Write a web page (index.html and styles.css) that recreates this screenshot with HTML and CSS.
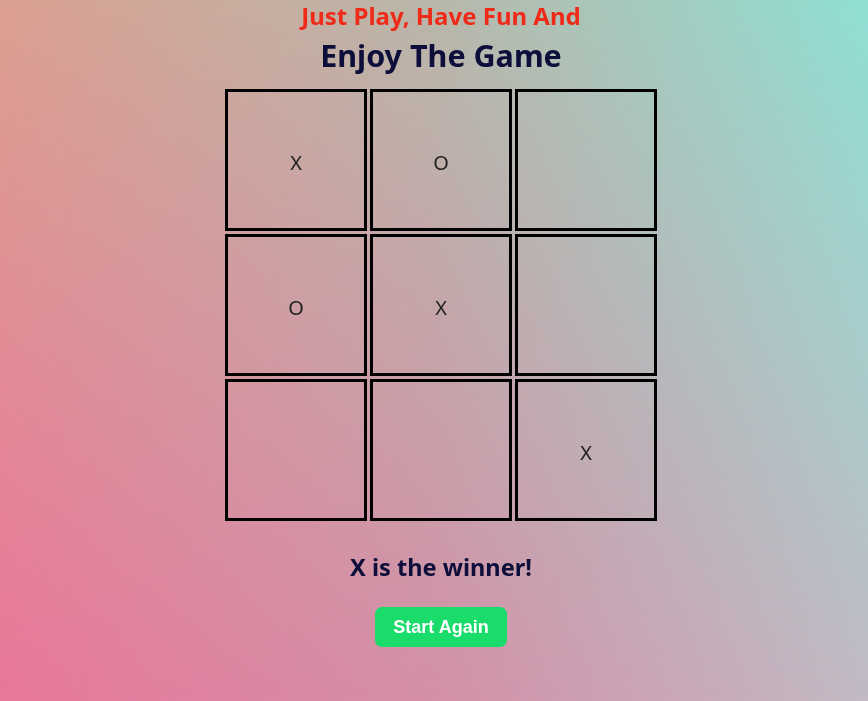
FILE: index.html
```html
<!DOCTYPE html>
<html lang="en">
<head>
<meta charset="utf-8">
<title>Tic Tac Toe</title>
<link rel="stylesheet" href="styles.css">
</head>
<body>
<main class="page">
  <h2 class="tagline">Just Play, Have Fun And</h2>
  <h1 class="title">Enjoy The Game</h1>
  <div class="board">
    <div class="cell">X</div>
    <div class="cell">O</div>
    <div class="cell"></div>
    <div class="cell">O</div>
    <div class="cell">X</div>
    <div class="cell"></div>
    <div class="cell"></div>
    <div class="cell"></div>
    <div class="cell">X</div>
  </div>
  <p class="status">X is the winner!</p>
  <button class="restart">Start Again</button>
</main>
</body>
</html>
```
FILE: styles.css
```css
html {
  min-height: 100%;
  background: linear-gradient(to right, #e9779a 0%, #d490a8 50%, #c2bac4 100%);
}

body {
  margin: 0;
  min-height: 100vh;
  font-family: "Noto Sans", "Open Sans", sans-serif;
}

body::before {
  content: "";
  position: fixed;
  inset: 0;
  z-index: -1;
  background: linear-gradient(to right, #dba091 0%, #b8b7aa 50%, #8fdfd3 100%);
  -webkit-mask-image: linear-gradient(to bottom, #000 0%, transparent 100%);
  mask-image: linear-gradient(to bottom, #000 0%, transparent 100%);
}

.page {
  display: flex;
  flex-direction: column;
  align-items: center;
  padding-left: 14px;
}

.tagline {
  margin: 0;
  font-size: 24px;
  line-height: 32px;
  font-weight: 700;
  color: #f02a18;
}

.title {
  margin: 3px 0 0;
  font-size: 30.5px;
  line-height: 40px;
  font-weight: 700;
  color: #0e0e3a;
}

.board {
  margin-top: 14px;
  display: grid;
  grid-template-columns: repeat(3, 142px);
  grid-auto-rows: 142px;
  gap: 3px;
}

.cell {
  box-sizing: border-box;
  border: 3px solid #000;
  padding-top: 4px;
  display: flex;
  align-items: center;
  justify-content: center;
  font-size: 20px;
  color: #222;
}

.status {
  margin: 30px 0 0;
  font-size: 23.6px;
  line-height: 32px;
  font-weight: 700;
  color: #0e0e3a;
}

.restart {
  margin-top: 24px;
  width: 132px;
  height: 40px;
  border: none;
  border-radius: 7px;
  background: #19dc6b;
  color: #fff;
  font-family: "Liberation Sans", Arial, sans-serif;
  font-size: 18px;
  font-weight: 700;
  padding: 0;
}
```
